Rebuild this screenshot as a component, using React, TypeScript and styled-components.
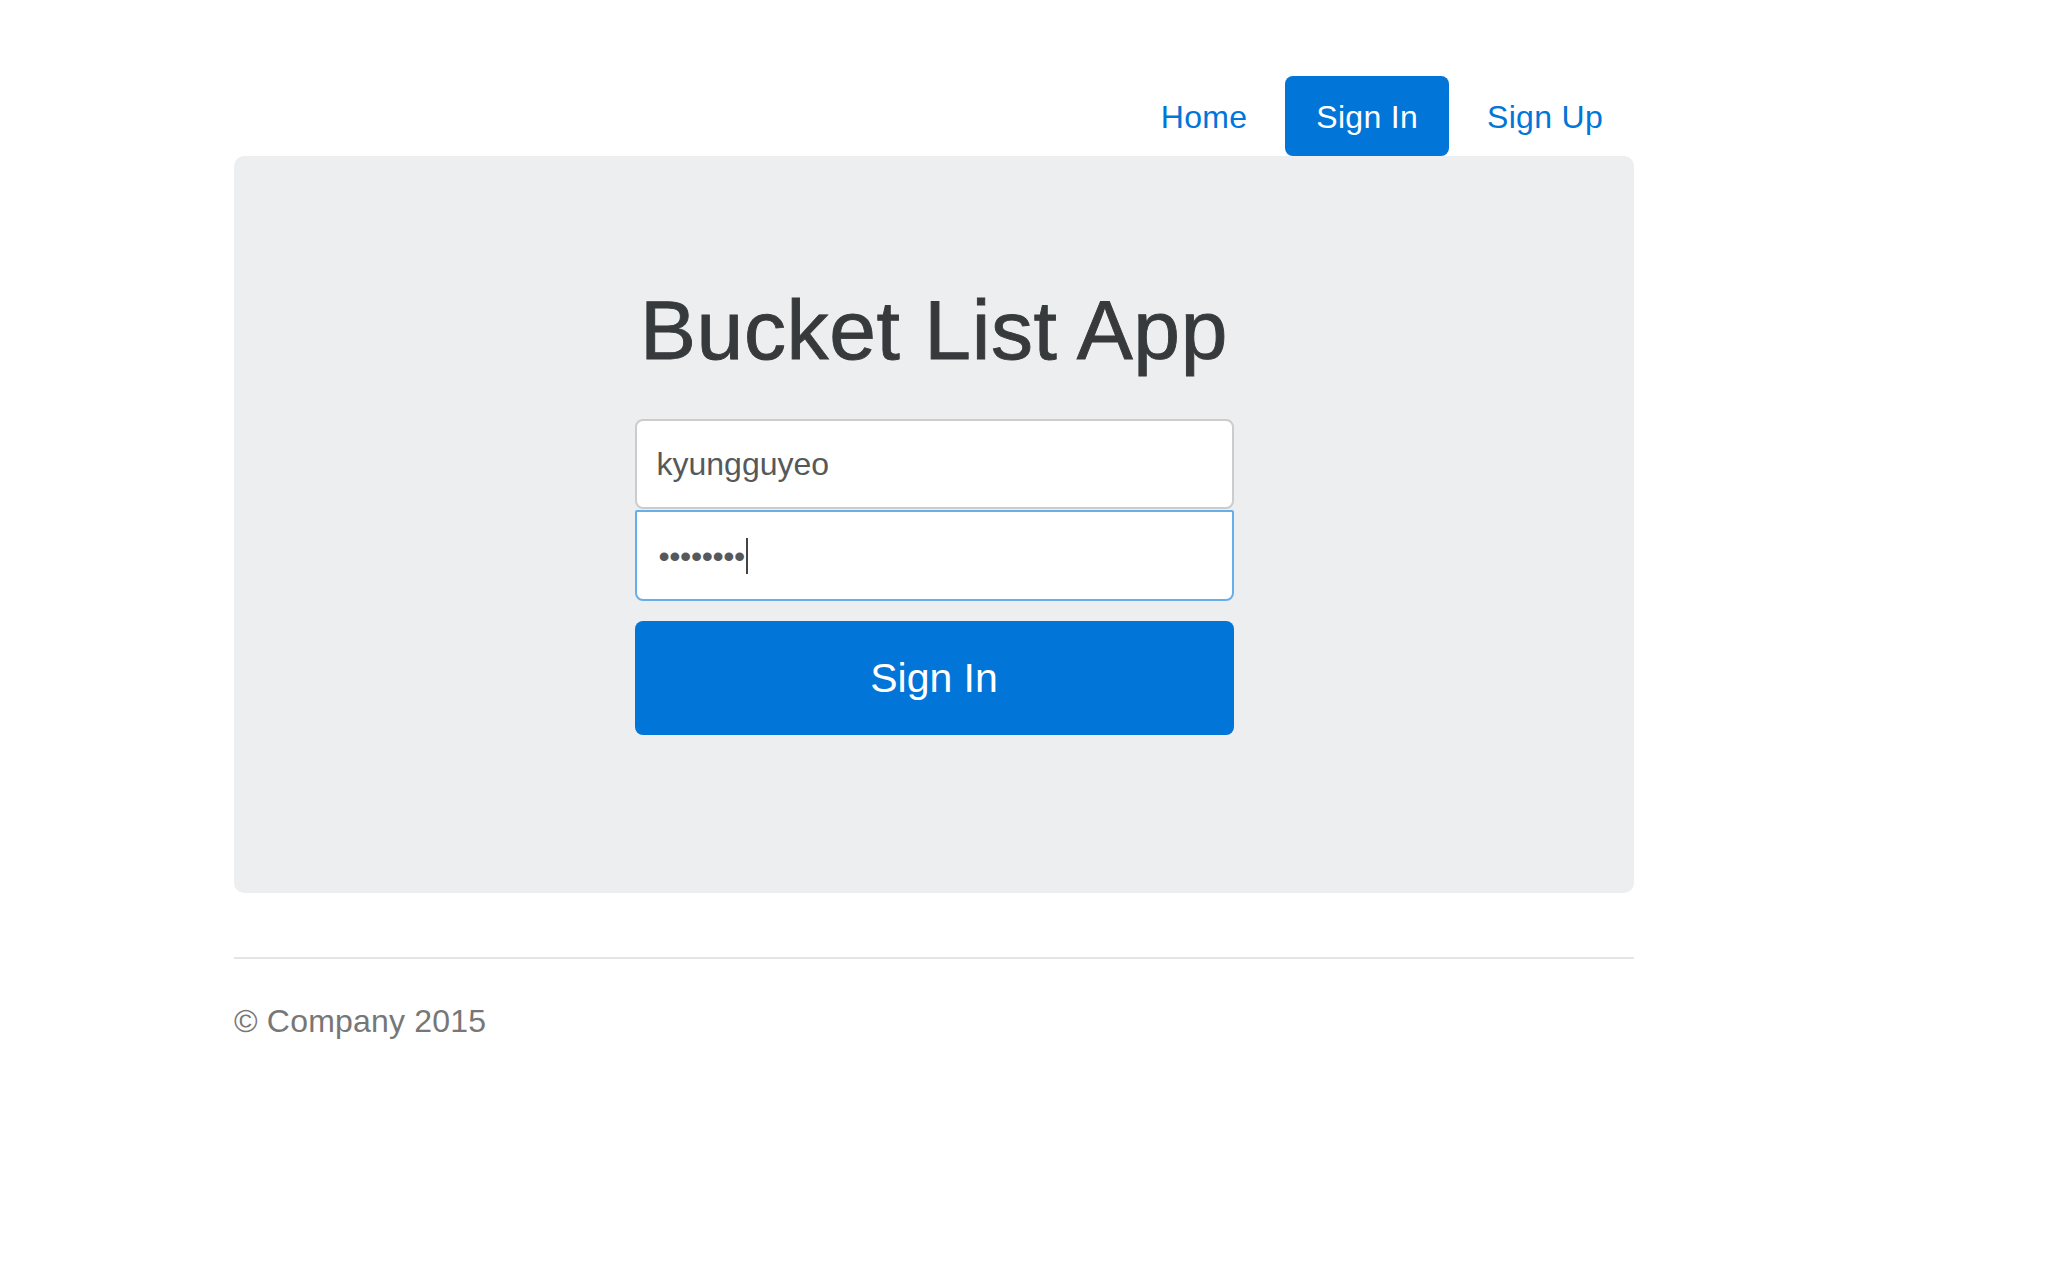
import React from "react";
import styled, { createGlobalStyle } from "styled-components";

const GlobalStyle = createGlobalStyle`
  html, body {
    margin: 0;
    padding: 0;
    background: #ffffff;
  }
  body {
    font-family: "Liberation Sans", Arial, Helvetica, sans-serif;
    font-size: 32px;
    line-height: 1.5;
    color: #373a3c;
  }
  * {
    box-sizing: border-box;
  }
`;

const navItems = ["Home", "Sign In", "Sign Up"];

const App = () => {
  const active = "Sign In";

  return (
    <>
      <GlobalStyle />
      <Container>
        <Header>
          <Nav>
            {navItems.map((item) => (
              <NavLink key={item} $active={item === active}>
                {item}
              </NavLink>
            ))}
          </Nav>
        </Header>

        <Jumbotron>
          <Title>Bucket List App</Title>
          <Form>
            <UserInput type="text" value="kyungguyeo" readOnly />
            <PasswordField>
              <Dots>••••••••</Dots>
              <Caret />
            </PasswordField>
            <SubmitButton type="button">Sign In</SubmitButton>
          </Form>
        </Jumbotron>

        <Footer>
          <FooterText>© Company 2015</FooterText>
        </Footer>
      </Container>
    </>
  );
};

export default App;

const Container = styled.div`
  width: 1400px;
  margin-left: 234px;
  padding-top: 76px;
`;

const Header = styled.header`
  display: flex;
  justify-content: flex-end;
`;

const Nav = styled.nav`
  display: flex;
  gap: 7px;
`;

const NavLink = styled.a<{ $active: boolean }>`
  display: block;
  padding: 17px 31px 15px;
  line-height: 48px;
  font-size: 32px;
  letter-spacing: 0.3px;
  text-decoration: none;
  cursor: pointer;
  color: ${({ $active }) => ($active ? "#ffffff" : "#0275d8")};
  background: ${({ $active }) => ($active ? "#0275d8" : "transparent")};
  border-radius: 8px;
`;

const Jumbotron = styled.section`
  display: flex;
  flex-direction: column;
  align-items: center;
  background: #eceeef;
  border-radius: 10px;
  padding: 128px 64px 158px;
`;

const Title = styled.h1`
  margin: 0 0 43px;
  font-size: 84px;
  line-height: 1.1;
  font-weight: 500;
  letter-spacing: 0.6px;
  color: #373a3c;
  -webkit-text-stroke: 0.9px #373a3c;
`;

const Form = styled.form`
  display: flex;
  flex-direction: column;
  width: 599px;
`;

const UserInput = styled.input`
  display: block;
  width: 100%;
  height: 90px;
  padding: 19px 20px;
  font-family: "Liberation Sans", Arial, sans-serif;
  font-size: 32px;
  line-height: 48px;
  color: #55595c;
  background: #ffffff;
  border: 2px solid #cccccc;
  border-radius: 8px;
  outline: none;
  margin-bottom: 1px;
`;

const PasswordField = styled.div`
  display: flex;
  align-items: center;
  height: 91px;
  padding: 0 20px 0 22px;
  background: #ffffff;
  border: 2px solid #66afe9;
  border-radius: 2px 2px 8px 8px;
  color: #55595c;
`;

const Dots = styled.span`
  font-size: 32px;
  line-height: 48px;
  letter-spacing: -0.4px;
`;

const Caret = styled.span`
  display: inline-block;
  width: 2px;
  height: 36px;
  margin-left: 1px;
  background: #444444;
`;

const SubmitButton = styled.button`
  margin-top: 20px;
  width: 100%;
  padding: 26px 48px;
  font-family: "Liberation Sans", Arial, sans-serif;
  font-size: 41px;
  line-height: 62px;
  color: #ffffff;
  background: #0275d8;
  border: none;
  border-radius: 8px;
  cursor: pointer;
`;

const Footer = styled.footer`
  margin-top: 64px;
  padding-top: 38px;
  border-top: 2px solid #e5e5e5;
`;

const FooterText = styled.p`
  margin: 0;
  font-size: 32px;
  line-height: 48px;
  letter-spacing: 0.2px;
  color: #777777;
`;
